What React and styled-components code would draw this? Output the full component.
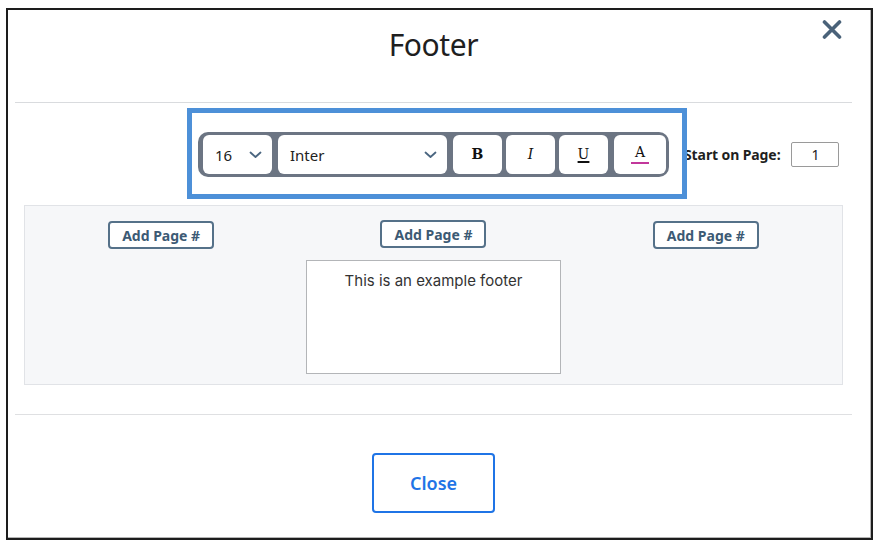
import React from "react";
import styled, { createGlobalStyle } from "styled-components";

const GlobalStyle = createGlobalStyle`
  html, body { margin: 0; padding: 0; background: #ffffff; }
  body { font-family: "Noto Sans", "Liberation Sans", sans-serif; color: #222; }
  * { box-sizing: border-box; }
`;

const Frame = styled.div`
  margin: 8px 0 0 6px;
  width: 867px;
  height: 532px;
  border: 2px solid #1d1d1d;
  box-shadow: inset -1px -1px 0 #b4b4b4;
  background: #fff;
  display: flex;
  flex-direction: column;
  padding: 0 19px 0 7px;
`;

const Header = styled.header`
  position: relative;
  height: 93px;
  border-bottom: 1px solid #d9dbde;
  display: flex;
  justify-content: center;
  padding-top: 15px;
`;

const Title = styled.h1`
  margin: 0;
  font-family: "Noto Sans", sans-serif;
  font-weight: 400;
  font-size: 30px;
  line-height: 40px;
  letter-spacing: -0.4px;
  color: #1f1f1f;
`;

const CloseX = styled.button`
  position: absolute;
  top: 6px;
  right: 7px;
  width: 26px;
  height: 26px;
  padding: 0;
  border: none;
  background: transparent;
  display: flex;
  align-items: center;
  justify-content: center;
`;

const ToolRow = styled.div`
  display: grid;
  grid-template-columns: 1fr auto 1fr;
  align-items: center;
  margin-top: 29px;
`;

const Toolbar = styled.div`
  grid-column: 2;
  position: relative;
  display: flex;
  align-items: center;
  height: 45px;
  padding: 3px 3px 3px 5px;
  background: #6c7583;
  border-radius: 10px;
`;

const Highlight = styled.div`
  position: absolute;
  top: -24px;
  left: -11px;
  right: -18px;
  bottom: -22px;
  border: 5px solid #4d90d8;
  pointer-events: none;
  z-index: 2;
`;

const Select = styled.div`
  width: ${(p) => p.$w}px;
  height: 39px;
  margin-right: ${(p) => p.$mr || 0}px;
  background: #fff;
  border-radius: 6px;
  display: flex;
  align-items: center;
  justify-content: space-between;
  padding: 0 10px 0 12px;
  font-size: 15px;
  color: #222;
`;

const FmtButton = styled.div`
  width: ${(p) => p.$w || 49}px;
  height: 39px;
  margin-right: ${(p) => p.$mr || 0}px;
  background: #fff;
  border-radius: 6px;
  display: flex;
  align-items: center;
  justify-content: center;
  font-family: "DejaVu Serif", "Liberation Serif", serif;
  font-size: 14px;
  color: #111;
`;

const Glyph = styled.span`
  font-weight: ${(p) => (p.$bold ? 700 : 400)};
  font-style: ${(p) => (p.$italic ? "italic" : "normal")};
  text-decoration: ${(p) => (p.$under ? "underline" : "none")};
  text-underline-offset: 2px;
  text-decoration-thickness: 1.5px;
  display: inline-flex;
  flex-direction: column;
  align-items: center;
  line-height: 15px;
`;

const ColorBar = styled.span`
  width: 18px;
  height: 2px;
  margin-top: 2px;
  background: #c2379b;
`;

const StartWrap = styled.div`
  grid-column: 3;
  display: flex;
  align-items: center;
  padding-left: 15px;
  gap: 11px;
`;

const StartLabel = styled.span`
  font-weight: 700;
  font-size: 14px;
  letter-spacing: -0.1px;
  color: #1f1f1f;
  white-space: nowrap;
`;

const PageInput = styled.div`
  width: 48px;
  height: 25px;
  border: 1px solid #9a9a9a;
  border-radius: 2px;
  font-size: 14px;
  display: flex;
  align-items: center;
  justify-content: center;
  color: #222;
`;

const Panel = styled.section`
  margin: 28px 9px 0;
  height: 180px;
  border: 1px solid #e1e3e7;
  background: #f6f7f9;
  display: grid;
  grid-template-columns: repeat(3, 1fr);
  padding-top: 15px;
`;

const Column = styled.div`
  display: flex;
  flex-direction: column;
  align-items: center;
  gap: 12px;
  margin-top: ${(p) => p.$shift || 0}px;
`;

const AddButton = styled.button`
  width: 106px;
  height: 28px;
  border: 2px solid #557189;
  border-radius: 4px;
  background: #fff;
  color: #3c5a74;
  font-family: "Noto Sans", sans-serif;
  font-weight: 700;
  font-size: 14px;
  padding: 0;
`;

const FooterBox = styled.div`
  width: 255px;
  height: 114px;
  background: #fff;
  border: 1px solid #b3b5b8;
  padding-top: 10px;
  text-align: center;
  font-family: Inter, sans-serif;
  font-size: 15px;
  line-height: 20px;
  color: #333;
`;

const Bottom = styled.footer`
  margin-top: 29px;
  border-top: 1px solid #dfe0e2;
  display: flex;
  justify-content: center;
  padding-top: 38px;
`;

const CloseButton = styled.button`
  width: 123px;
  height: 60px;
  border: 2px solid #1f74e6;
  border-radius: 4px;
  background: #fff;
  color: #1f74e6;
  font-family: "Noto Sans", sans-serif;
  font-weight: 600;
  font-size: 18px;
`;

const Chevron = () => (
  <svg width="13" height="8" viewBox="0 0 13 8" fill="none">
    <path d="M1.5 1.5 L6.5 6 L11.5 1.5" stroke="#4b6680" strokeWidth="1.8" strokeLinecap="round" strokeLinejoin="round" />
  </svg>
);

export default function App() {
  return (
    <>
      <GlobalStyle />
      <Frame>
        <Header>
          <Title>Footer</Title>
          <CloseX aria-label="Close">
            <svg width="20" height="19" viewBox="0 0 20 19">
              <path d="M2.5 2 L17.5 17 M17.5 2 L2.5 17" stroke="#4a6279" strokeWidth="3.6" strokeLinecap="round" />
            </svg>
          </CloseX>
        </Header>

        <ToolRow>
          <Toolbar>
            <Select $w={69} $mr={6}>
              <span>16</span>
              <Chevron />
            </Select>
            <Select $w={169} $mr={6}>
              <span>Inter</span>
              <Chevron />
            </Select>
            <FmtButton $mr={4}><Glyph $bold>B</Glyph></FmtButton>
            <FmtButton $mr={4}><Glyph $italic>I</Glyph></FmtButton>
            <FmtButton $mr={6}><Glyph $under>U</Glyph></FmtButton>
            <FmtButton $w={52}>
              <Glyph>A<ColorBar /></Glyph>
            </FmtButton>
            <Highlight />
          </Toolbar>
          <StartWrap>
            <StartLabel>Start on Page:</StartLabel>
            <PageInput>1</PageInput>
          </StartWrap>
        </ToolRow>

        <Panel>
          <Column>
            <AddButton>Add Page #</AddButton>
          </Column>
          <Column $shift={-1}>
            <AddButton>Add Page #</AddButton>
            <FooterBox>This is an example footer</FooterBox>
          </Column>
          <Column>
            <AddButton>Add Page #</AddButton>
          </Column>
        </Panel>

        <Bottom>
          <CloseButton>Close</CloseButton>
        </Bottom>
      </Frame>
    </>
  );
}
